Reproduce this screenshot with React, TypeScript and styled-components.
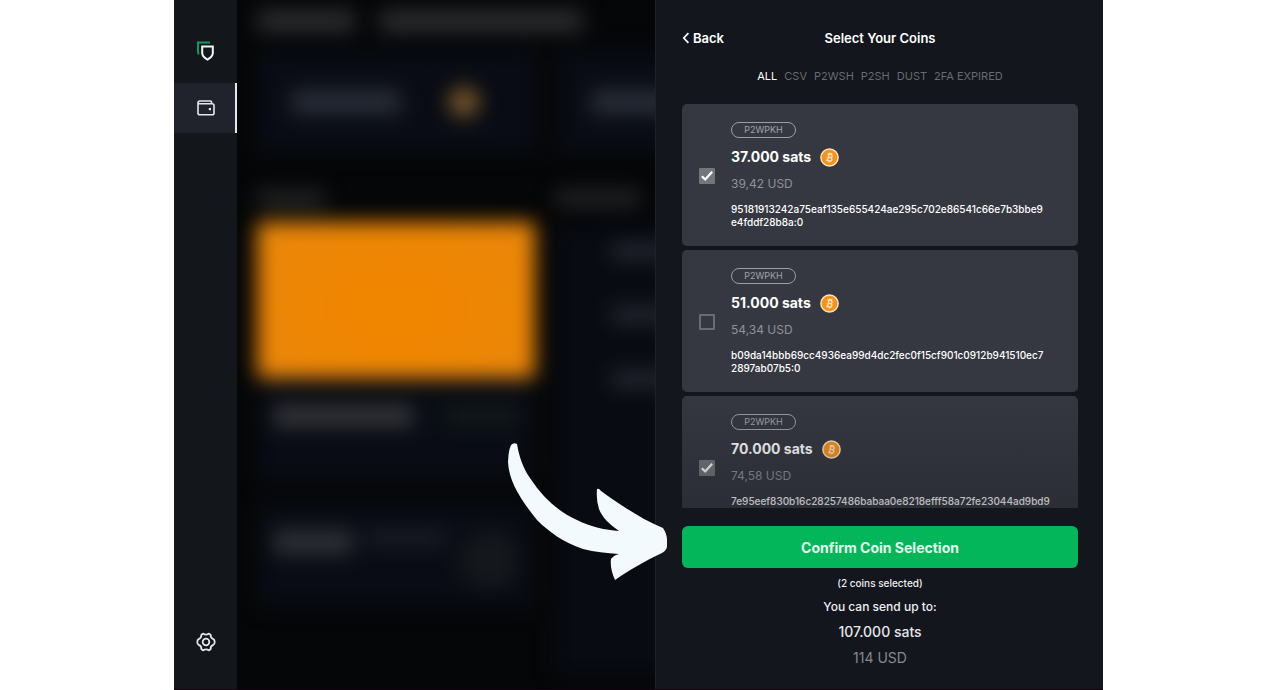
import React, { useState } from "react";
import styled, { createGlobalStyle, css } from "styled-components";

const GlobalStyle = createGlobalStyle`
  *, *::before, *::after { box-sizing: border-box; }
  body { margin: 0; background: #ffffff; }
  body, button, input { font-family: Inter, "Liberation Sans", sans-serif; }
  button { border: 0; padding: 0; background: none; color: inherit; cursor: pointer; }
  h1, p, ul { margin: 0; padding: 0; }
`;

/* ---------- Shell ---------- */

const Page = styled.div`
  height: 100vh;
  padding: 0 177px 0 174px;
`;

const Shell = styled.div`
  position: relative;
  display: flex;
  height: 100%;
  overflow: hidden;
  background: #13161c;
  border-bottom: 1px solid #14040f;
  color: #ffffff;
`;

const Sidebar = styled.nav`
  flex: 0 0 63px;
  display: flex;
  flex-direction: column;
  background: #13171c;
  padding: 26px 0 22px;
`;

const NavButton = styled.button<{ $active?: boolean }>`
  display: flex;
  align-items: center;
  justify-content: center;
  width: 100%;
  height: 50px;
  color: #e4e6ea;
  ${({ $active }) =>
    $active &&
    css`
      background: #20232c;
      box-shadow: inset -2px 0 #e6e7ea;
    `}
`;

const NavSpacer = styled.div`
  flex: 1;
`;

const LogoSlot = styled.div`
  height: 57px;
`;

/* ---------- Dimmed wallet dashboard behind the drawer ---------- */

const Backdrop = styled.div`
  flex: 1;
  min-width: 0;
  overflow: hidden;
  background: #050607;
`;

const Dashboard = styled.div`
  display: flex;
  flex-direction: column;
  width: 600px;
  padding: 10px 0 0 20px;
  filter: blur(10px);
`;

const Line = styled.div<{ $w: number; $h?: number; $color?: string }>`
  width: ${({ $w }) => $w}px;
  height: ${({ $h }) => $h ?? 20}px;
  border-radius: 4px;
  background: ${({ $color }) => $color ?? "#2c2d2f"};
`;

const TitleRow = styled.div`
  display: flex;
  gap: 24px;
  height: 40px;
`;

const BalanceRow = styled.div`
  display: flex;
  gap: 20px;
  height: 140px;
`;

const BalanceCard = styled.div`
  display: flex;
  align-items: center;
  justify-content: space-between;
  flex: 0 0 280px;
  height: 104px;
  padding: 0 58px 0 34px;
  background: #090c14;
`;

const Coin = styled.div`
  width: 30px;
  height: 30px;
  border-radius: 50%;
  background: #7c592a;
`;

const Columns = styled.div`
  display: flex;
  gap: 20px;
`;

const AccountColumn = styled.div`
  display: flex;
  flex-direction: column;
  flex: 0 0 278px;
`;

const AccountCard = styled.div`
  height: 156px;
  margin-top: 14px;
  border-radius: 4px;
  background: radial-gradient(ellipse at 50% 55%, #f08500 20%, #e8870c 100%);
`;

const InfoCard = styled.div`
  display: flex;
  justify-content: space-between;
  height: 104px;
  margin-bottom: 20px;
  padding: 28px 16px;
  background: #090c14;
`;

const Ring = styled.div`
  width: 60px;
  height: 60px;
  border-radius: 50%;
  background: #14171b;
`;

const ActivityColumn = styled.div`
  display: flex;
  flex-direction: column;
  flex: 1;
`;

const ActivityList = styled.div`
  display: flex;
  flex-direction: column;
  gap: 46px;
  height: 450px;
  margin-top: 20px;
  padding: 16px 0 0 56px;
  background: #080b12;
`;

/* ---------- Drawer ---------- */

const Drawer = styled.main`
  flex: 0 0 448px;
  display: flex;
  flex-direction: column;
  min-height: 0;
  padding: 24px 25px 0 26px;
  border-left: 1px solid #1e2227;
  background: #13161d;
`;

const DrawerHeader = styled.header`
  display: grid;
  grid-template-columns: 1fr auto 1fr;
  align-items: center;
  height: 28px;
`;

const BackButton = styled.button`
  display: flex;
  align-items: center;
  gap: 3px;
  justify-self: start;
  font-size: 13px;
  font-weight: 600;
`;

const Title = styled.h1`
  font-size: 13px;
  font-weight: 600;
`;

const Filters = styled.div`
  display: flex;
  justify-content: center;
  gap: 7px;
  margin: 14px 0 18px;
`;

const Filter = styled.button<{ $active: boolean }>`
  font-size: 11px;
  line-height: 20px;
  font-weight: 400;
  white-space: nowrap;
  color: ${({ $active }) => ($active ? "#ffffff" : "#686b71")};
`;

const CoinList = styled.ul`
  position: relative;
  flex: 1;
  min-height: 0;
  display: flex;
  flex-direction: column;
  gap: 4px;
  overflow: hidden;
  list-style: none;

  &::after {
    content: "";
    position: absolute;
    inset: auto 0 0;
    height: 120px;
    pointer-events: none;
    background: linear-gradient(rgba(19, 22, 29, 0), rgba(19, 22, 29, 0.3));
  }
`;

const CoinCard = styled.li`
  flex: 0 0 142px;
  border-radius: 5px;
  background: #353840;
`;

const CoinLabel = styled.label`
  display: flex;
  align-items: center;
  gap: 16px;
  height: 100%;
  padding: 1px 16px 0 17px;
  cursor: pointer;
`;

const CheckBox = styled.input`
  appearance: none;
  flex: 0 0 16px;
  height: 16px;
  margin: 0;
  border: 2px solid #696c73;
  border-radius: 1px;

  &:checked {
    border-color: #73767b;
    background: #73767b
      url("data:image/svg+xml,%3Csvg xmlns='http://www.w3.org/2000/svg' viewBox='0 0 12 12'%3E%3Cpath d='M0.8 6.2 4.2 9.4 11.2 1.8' fill='none' stroke='white' stroke-width='2.2'/%3E%3C/svg%3E")
      center / 12px 12px no-repeat;
  }
`;

const CoinBody = styled.div`
  display: flex;
  flex-direction: column;
  align-items: flex-start;
  min-width: 0;
`;

const TypeBadge = styled.span`
  width: 65px;
  height: 16px;
  border: 1px solid #9b9ea4;
  border-radius: 8px;
  font-size: 9px;
  line-height: 14px;
  text-align: center;
  color: #a0a3a8;
`;

const Amount = styled.span`
  display: flex;
  align-items: center;
  gap: 9px;
  margin-top: 8px;
  font-size: 14px;
  line-height: 22px;
  font-weight: 700;
`;

const Fiat = styled.span`
  margin-top: 6px;
  font-size: 12px;
  line-height: 20px;
  color: #8f9298;
`;

const Outpoint = styled.span`
  min-height: 26px;
  margin-top: 9px;
  font-size: 10px;
  line-height: 13px;
  font-weight: 500;
  color: #ffffff;
  overflow-wrap: anywhere;
`;

const ConfirmButton = styled.button`
  flex: 0 0 42px;
  margin-top: 18px;
  border-radius: 6px;
  background: #03b65a;
  color: #e8fbf0;
  font-size: 14px;
  font-weight: 700;
`;

const Summary = styled.section`
  display: flex;
  flex-direction: column;
  align-items: center;
  padding: 6px 0 20px;
  color: #eeeff1;
`;

const SelectedCount = styled.p`
  font-size: 10px;
  line-height: 18px;
  font-weight: 500;
`;

const SendHint = styled.p`
  margin-top: 5px;
  font-size: 12px;
  line-height: 20px;
  font-weight: 500;
`;

const Total = styled.p<{ $muted?: boolean }>`
  margin-top: 4px;
  font-size: 14px;
  line-height: 22px;
  font-weight: ${({ $muted }) => ($muted ? 400 : 500)};
  color: ${({ $muted }) => ($muted ? "#85888e" : "#e6e7ea")};
`;

const Pointer = styled.svg`
  position: absolute;
  right: 435px;
  bottom: 109px;
  width: 161px;
  height: 138px;
  pointer-events: none;
`;

/* ---------- Drawings ---------- */

const LogoIcon = () => (
  <svg width="18" height="20" viewBox="0 0 18 20" fill="none" aria-hidden="true">
    <path d="M1.8 13.5C1.2 12.4 1 11.4 1 10V1.6H13" stroke="#149a5e" strokeWidth="2" />
    <path
      d="M5.2 5.6H15.8V12C15.8 15 13.4 17 10.5 18.6C7.6 17 5.2 15 5.2 12Z"
      stroke="#f4f5f6"
      strokeWidth="2"
    />
  </svg>
);

const WalletIcon = () => (
  <svg width="18" height="16" viewBox="0 0 18 16" fill="none" stroke="currentColor" aria-hidden="true">
    <path
      d="M14.6 3.5V2.3Q14.6 1 13.3 1H2.8Q1 1 1 2.8V13Q1 14.8 2.8 14.8H15.2Q17 14.8 17 13V5.6Q17 3.8 15.2 3.8H2.6Q1 3.8 1 2.6"
      strokeWidth="1.6"
    />
    <rect x="11.8" y="8" width="2.2" height="2.2" fill="currentColor" stroke="none" />
  </svg>
);

const SettingsIcon = () => (
  <svg
    width="20"
    height="20"
    viewBox="0 0 20 20"
    fill="none"
    stroke="currentColor"
    strokeWidth="1.8"
    strokeLinejoin="round"
    aria-hidden="true"
  >
    <path d="M7.3 1.6Q10 3.6 12.7 1.6L14.6 2.7Q14.3 6 17.3 7.1Q18.7 7.6 18.7 10T17.3 12.9Q14.3 14 14.6 17.3L12.7 18.4Q10 16.4 7.3 18.4L5.4 17.3Q5.7 14 2.7 12.9Q1.3 12.4 1.3 10T2.7 7.1Q5.7 6 5.4 2.7Z" />
    <circle cx="10" cy="10" r="3.3" />
  </svg>
);

const BackIcon = () => (
  <svg width="8" height="12" viewBox="0 0 8 12" fill="none" stroke="currentColor" strokeWidth="1.7" aria-hidden="true">
    <path d="M6.4 1.2 1.8 6 6.4 10.8" />
  </svg>
);

const BitcoinIcon = () => (
  <svg width="19" height="19" viewBox="0 0 19 19" fill="none" aria-hidden="true">
    <circle cx="9.5" cy="9.5" r="8.6" fill="#f7931a" stroke="#fde6c4" strokeWidth="1.5" />
    <g transform="rotate(13 9.5 9.5)" stroke="#fde3c0" strokeWidth="1.4">
      <path d="M6.8 6.3H10.2Q11.8 6.3 11.8 7.8T10.2 9.4H8.2M10.2 9.4Q12.2 9.4 12.2 11.1T10.4 12.8H6.8M8.2 6.3V12.8M8.8 4.8V6.3M10.6 4.8V6.3M8.8 12.8V14.3M10.6 12.8V14.3" />
    </g>
  </svg>
);

/* ---------- Data ---------- */

const FILTERS = ["ALL", "CSV", "P2WSH", "P2SH", "DUST", "2FA EXPIRED"];

/* Outpoints are split where a line may break. */
const COINS = [
  {
    sats: "37.000",
    usd: "39,42",
    outpoint: ["95181913242a75eaf135e655424ae295c702e86541c66e7b3bbe9", "e4fddf28b8a:0"],
    selected: true,
  },
  {
    sats: "51.000",
    usd: "54,34",
    outpoint: ["b09da14bbb69cc4936ea99d4dc2fec0f15cf901c0912b941510ec7", "2897ab07b5:0"],
    selected: false,
  },
  {
    sats: "70.000",
    usd: "74,58",
    outpoint: ["7e95eef830b16c28257486babaa0e8218efff58a72fe23044ad9bd9", ""],
    selected: true,
  },
];

export default function App() {
  const [filter, setFilter] = useState("ALL");

  return (
    <Page>
      <GlobalStyle />
      <Shell>
        <Sidebar aria-label="Main">
          <LogoSlot>
            <NavButton aria-label="Home">
              <LogoIcon />
            </NavButton>
          </LogoSlot>
          <NavButton $active aria-label="Wallets">
            <WalletIcon />
          </NavButton>
          <NavSpacer />
          <NavButton aria-label="Settings">
            <SettingsIcon />
          </NavButton>
        </Sidebar>

        <Backdrop aria-hidden="true">
          <Dashboard>
            <TitleRow>
              <Line $w={98} $h={22} />
              <Line $w={204} $h={22} />
            </TitleRow>
            <BalanceRow>
              <BalanceCard>
                <Line $w={110} $h={24} $color="#292d37" />
                <Coin />
              </BalanceCard>
              <BalanceCard>
                <Line $w={110} $h={24} $color="#292d37" />
              </BalanceCard>
            </BalanceRow>
            <Columns>
              <AccountColumn>
                <Line $w={68} $h={18} $color="#232425" />
                <AccountCard />
                <InfoCard>
                  <Line $w={140} $color="#38383c" />
                  <Line $w={76} $color="#12191a" />
                </InfoCard>
                <InfoCard>
                  <Line $w={80} $h={24} $color="#2e3036" />
                  <Line $w={80} $h={16} $color="#1a1d26" />
                  <Ring />
                </InfoCard>
              </AccountColumn>
              <ActivityColumn>
                <Line $w={86} $h={16} $color="#252627" />
                <ActivityList>
                  <Line $w={120} $h={18} $color="#22252d" />
                  <Line $w={120} $h={18} $color="#22252d" />
                  <Line $w={120} $h={18} $color="#22252d" />
                </ActivityList>
              </ActivityColumn>
            </Columns>
          </Dashboard>
        </Backdrop>

        <Drawer>
          <DrawerHeader>
            <BackButton>
              <BackIcon />
              Back
            </BackButton>
            <Title>Select Your Coins</Title>
          </DrawerHeader>

          <Filters>
            {FILTERS.map((name) => (
              <Filter key={name} $active={name === filter} onClick={() => setFilter(name)}>
                {name}
              </Filter>
            ))}
          </Filters>

          <CoinList>
            {COINS.map((coin) => (
              <CoinCard key={coin.outpoint[0]}>
                <CoinLabel>
                  <CheckBox type="checkbox" defaultChecked={coin.selected} />
                  <CoinBody>
                    <TypeBadge>P2WPKH</TypeBadge>
                    <Amount>
                      {coin.sats} sats
                      <BitcoinIcon />
                    </Amount>
                    <Fiat>{coin.usd} USD</Fiat>
                    <Outpoint>
                      {coin.outpoint[0]}
                      <wbr />
                      {coin.outpoint[1]}
                    </Outpoint>
                  </CoinBody>
                </CoinLabel>
              </CoinCard>
            ))}
          </CoinList>

          <ConfirmButton>Confirm Coin Selection</ConfirmButton>

          <Summary>
            <SelectedCount>(2 coins selected)</SelectedCount>
            <SendHint>You can send up to:</SendHint>
            <Total>107.000 sats</Total>
            <Total $muted>114 USD</Total>
          </Summary>
        </Drawer>

        <Pointer viewBox="0 0 161 138" aria-hidden="true">
          <path
            d="M4 3Q7 0 10 2C12 14 16 26 23 36C36 56 52 70 70 78C84 85 98 88 112 89C102 82 95 75 92 67Q89 58 90 47Q92 46 94 49C112 62 134 77 156 86Q160 92 160 98V104Q160 108 155 111C138 119 124 127 108 138C105 131 103 124 104 117Q107 113 112 112C99 111 88 110 76 107C56 100 42 90 30 78C14 58 2 40 1 20Q1 10 4 3Z"
            fill="#f3fafe"
          />
        </Pointer>
      </Shell>
    </Page>
  );
}
